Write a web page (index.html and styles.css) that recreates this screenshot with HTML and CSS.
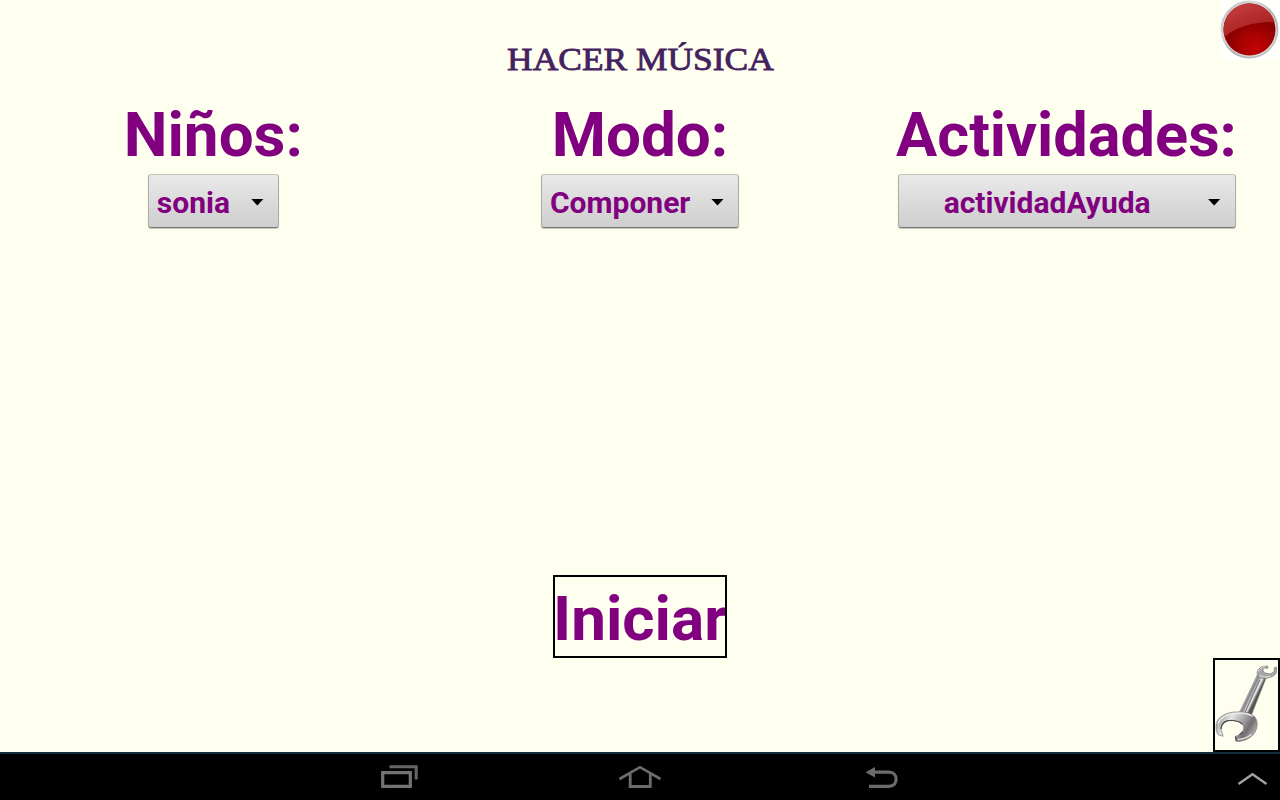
FILE: index.html
```
<!DOCTYPE html>
<html lang="es">
<head>
<meta charset="utf-8">
<title>Hacer Música</title>
<link rel="stylesheet" href="styles.css">
</head>
<body>
<div class="screen">
  <main class="content">
    <h1 class="title"><span class="title-text">HACER MÚSICA</span></h1>
    <section class="options">
      <div class="option">
        <h2 class="label label-kids">Niños:</h2>
        <button class="spinner spinner-kids"><span class="value">sonia</span><span class="caret"></span></button>
      </div>
      <div class="option">
        <h2 class="label label-mode">Modo:</h2>
        <button class="spinner spinner-mode"><span class="value">Componer</span><span class="caret"></span></button>
      </div>
      <div class="option">
        <h2 class="label label-activity">Actividades:</h2>
        <button class="spinner spinner-activity"><span class="value">actividadAyuda</span><span class="caret"></span></button>
      </div>
    </section>
    <button class="start"><span class="start-text">Iniciar</span></button>
    <button class="exit" aria-label="Salir">
      <svg width="60" height="60" viewBox="0 0 60 60">
        <defs>
          <radialGradient id="red" cx=".6" cy=".85" r=".75"><stop offset="0" stop-color="#c00403"/><stop offset=".35" stop-color="#aa0202"/><stop offset=".7" stop-color="#8a0000"/><stop offset="1" stop-color="#a00808"/></radialGradient>
          <linearGradient id="shine" x1="0" y1="0" x2=".6" y2="1"><stop offset="0" stop-color="#c84444"/><stop offset=".5" stop-color="#b52f2f"/><stop offset="1" stop-color="#a81c1c"/></linearGradient>
          <linearGradient id="rim" x1="0" y1="0" x2="1" y2="1"><stop offset="0" stop-color="#a5a5a8"/><stop offset=".3" stop-color="#d9dadd"/><stop offset=".55" stop-color="#a9a9ad"/><stop offset="1" stop-color="#d0d0d3"/></linearGradient>
        </defs>
        <rect width="60" height="60" fill="#fffffb"/>
        <circle cx="29.5" cy="29.5" r="28.9" fill="url(#rim)"/>
        <circle cx="29.5" cy="29.5" r="27.2" fill="#dcd8db"/>
        <circle cx="29.5" cy="29.5" r="26" fill="url(#red)"/>
        <path d="M4.6 37A26 26 0 1 1 54.7 22C34 22 17 26 4.6 37Z" fill="url(#shine)"/>
      </svg>
    </button>
    <button class="settings" aria-label="Configuración">
      <svg width="63" height="90" viewBox="30 24 189 270">
        <defs>
          <linearGradient id="shaft" gradientUnits="userSpaceOnUse" x1="122" y1="117" x2="155" y2="133"><stop offset="0" stop-color="#858385"/><stop offset=".22" stop-color="#d0ced0"/><stop offset=".42" stop-color="#858285"/><stop offset=".6" stop-color="#b5b2b5"/><stop offset=".8" stop-color="#eaeaea"/><stop offset="1" stop-color="#555"/></linearGradient>
          <linearGradient id="jaw" gradientUnits="userSpaceOnUse" x1="35" y1="190" x2="150" y2="260"><stop offset="0" stop-color="#8a888a"/><stop offset=".3" stop-color="#e6e6e6"/><stop offset=".55" stop-color="#aaa7aa"/><stop offset=".75" stop-color="#746d72"/><stop offset="1" stop-color="#c8c8c8"/></linearGradient>
        </defs>
        <path d="M157 68L166 78L183 79L139 190L100 183Q108 174 113 161Z" fill="url(#shaft)" stroke="#777" stroke-width="1.5"/>
        <path d="M164 84L121 180" stroke="#777377" stroke-width="3"/>
        <path d="M189 43C169 39 154 52 157 67C162 79 181 82 195 76C207 72 216 66 215 54L214 45L208 47L207 60L195 66L178 62L173 54L178 48L188 49Z" fill="#a9a6a9" stroke="#777477" stroke-width="2"/>
        <path d="M160 59Q164 46 181 44M163 71Q178 79 196 73" stroke="#e4e4e4" stroke-width="3" fill="none"/>
        <path d="M54 253L39 248C32 237 31 222 36 209C45 190 70 179 98 180C119 178 140 183 151 197C163 215 155 242 137 255C124 265 108 269 94 268L91 253C107 249 117 237 116 224C110 211 98 207 82 205C65 204 51 213 48 230Z" fill="url(#jaw)" stroke="#777477" stroke-width="2"/>
        <path d="M48 231Q48 212 68 206Q98 203 112 216M91 254L94 267M113 240L103 249" stroke="#4c484b" stroke-width="3.5" fill="none"/>
        <path d="M38 216Q48 187 93 184Q125 181 143 193" stroke="#eee" stroke-width="3.5" fill="none"/>
        <path d="M98 263Q124 261 139 247" stroke="#dedede" stroke-width="4" fill="none"/>
      </svg>
    </button>
  </main>
  <nav class="navbar">
    <svg width="1280" height="46" viewBox="0 754 1280 46" fill="none">
      <path d="M389.5 766.7H416.2V779.5" stroke="#666" stroke-width="3"/>
      <path d="M382.7 772.7H410.3V786.3H382.7Z" stroke="#737373" stroke-width="3.2"/>
      <path d="M619.5 779L640 767.2L660.5 779" stroke="#6c6c6c" stroke-width="2.6"/>
      <path d="M630.2 774V786.5H650.3V774" stroke="#6c6c6c" stroke-width="2.8"/>
      <path d="M874 772.2H889C898.5 772.2 898.5 786.3 889 786.3H869" stroke="#6c6c6c" stroke-width="3.2"/>
      <path d="M865.5 772.2L875 767V777.4Z" fill="#6c6c6c"/>
      <path d="M1238.5 784L1252.5 774.2L1266.5 784" stroke="#a0a0a0" stroke-width="2.5"/>
    </svg>
  </nav>
</div>
</body>
</html>
```
FILE: styles.css
```
body { margin: 0; }
button { appearance: none; margin: 0; border: 0; padding: 0; background: none; border-radius: 0; }
svg { display: block; }
.screen { width: 1280px; height: 800px; display: flex; flex-direction: column; overflow: hidden; background: #ffffef; font-family: Roboto, sans-serif; color: #800080; }
.content { position: relative; height: 752px; display: flex; flex-direction: column; align-items: center; }
.title { margin: 0; padding-top: 39px; height: 62px; font: 400 32px/40px "Liberation Serif", serif; color: #44215f; }
.title-text { display: inline-block; transform: scaleX(1.107); -webkit-text-stroke: .8px #44215f; white-space: nowrap; }
.options { width: 1280px; display: grid; grid-template-columns: repeat(3, 1fr); }
.option { display: flex; flex-direction: column; align-items: center; }
.label { margin: 0; height: 73px; font-size: 62px; line-height: 68px; font-weight: 700; white-space: nowrap; }
.label-activity { transform: scaleX(.988); }
.spinner { display: flex; align-items: center; box-sizing: border-box; height: 54px; padding: 4px 14px 0 8px; border: 1px solid #c5c6b5; border-right-color: #adada5; border-left-color: #adada5; border-bottom-color: #777; border-radius: 3px; background: linear-gradient(#e9e9e9, #cecece); box-shadow: 0 1px 1px #c4c4ba; color: #800080; font: 700 30px/36px Roboto, sans-serif; }
.spinner-kids { width: 131px; }
.spinner-mode { width: 198px; }
.spinner-activity { width: 338px; }
.value { flex: 1; text-align: left; white-space: nowrap; }
.spinner-activity .value { padding-left: 37px; }
.caret { width: 13px; height: 7px; margin-bottom: 2px; background: #000; clip-path: polygon(0 0, 100% 0, 50% 100%); }
.start { display: flex; align-items: center; box-sizing: border-box; width: 174px; height: 83px; margin-top: 347px; border: 2px solid #000; color: #800080; font: 700 62px/78px Roboto, sans-serif; overflow: hidden; }
.start-text { white-space: nowrap; padding-top: 5px; margin-left: -2px; }
.exit { position: absolute; right: 0; top: 0; }
.settings { position: absolute; right: 0; bottom: 0; border: 2px solid #000; }
.navbar { height: 46px; border-top: 2px solid #102f40; background: #000; }
```
